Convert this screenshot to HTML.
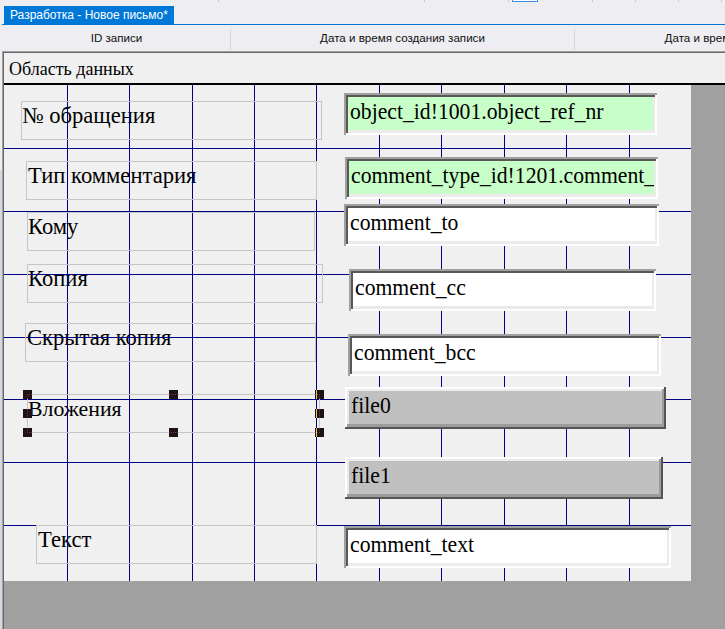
<!DOCTYPE html>
<html><head><meta charset="utf-8">
<style>
html,body{margin:0;padding:0;}
body{width:725px;height:629px;overflow:hidden;position:relative;background:#eeeef2;font-family:"Liberation Sans",sans-serif;}
.a{position:absolute;}
.tick{position:absolute;top:0;width:1px;height:2px;background:#c4c8d6;}
#tab{left:4px;top:6px;width:170px;height:18px;background:#0078d7;color:#fff;font-size:12px;}
#tab span{position:absolute;left:6px;top:2px;white-space:nowrap;}
#tabline{left:2px;top:24px;width:723px;height:1px;background:#0078d7;}
.hd{position:absolute;top:31px;font-size:11.6px;color:#101010;white-space:nowrap;text-align:center;}
.sep{position:absolute;top:29px;width:1px;height:21px;background:#d3d6de;}
#ob{left:4px;top:53px;width:721px;height:30px;background:#f0f0f0;}
#obt{left:9px;top:59px;font-family:"Liberation Serif",serif;font-size:18px;color:#000;white-space:nowrap;}
#form{left:4px;top:85px;width:687px;height:496px;background:#f0f0f0;}
.vl{position:absolute;top:85px;width:1px;height:496px;background:#000080;}
.hl{position:absolute;left:4px;width:687px;height:1px;background:#000080;}
.lt{position:absolute;font-family:"Liberation Serif",serif;font-size:22.6px;color:#000;white-space:nowrap;line-height:26px;}
.lb{position:absolute;box-sizing:border-box;border:1px solid #c6c6c6;height:39px;}
.inp{position:absolute;box-sizing:border-box;height:42px;background:#fff;box-shadow:inset 2px 2px 0 #a0a0a0,inset -2px -2px 0 #ffffff,inset 4px 4px 0 #585858,inset -4px -5px 0 #ebebeb;}
.inp>div,.btn>div{position:absolute;left:4px;top:4px;right:4px;bottom:4px;overflow:hidden;}
.btn{position:absolute;box-sizing:border-box;height:42px;background:#c0c0c0;box-shadow:inset -2px -2px 0 #555555,inset 2px 2px 0 #ffffff,inset -4px -5px 0 #9c9c9c,inset 4px 4px 0 #ebebeb;}
.it{position:absolute;left:2px;top:2px;transform:scaleY(1.1);transform-origin:0 20px;font-family:"Liberation Serif",serif;font-size:21.7px;line-height:26px;color:#000;white-space:nowrap;}
.g{background:#c8ffc8;}
.h{position:absolute;width:9px;height:9px;background:#1e1212;}
</style></head><body>
<!-- top ticks -->
<div class="tick" style="left:218px"></div>
<div class="tick" style="left:424px"></div>
<div class="tick" style="left:508px"></div>
<div class="tick" style="left:592px"></div>
<div class="tick" style="left:635px"></div>
<div class="tick" style="left:678px"></div>
<div class="tick" style="left:721px"></div>
<div class="a" style="left:512px;top:0;width:24px;height:1px;border:1px solid #3c8ee0;border-top:none;background:#fff"></div>

<div id="tab" class="a"><span>Разработка - Новое письмо*</span></div>
<div id="tabline" class="a"></div>

<div class="hd" style="left:2px;width:229px">ID записи</div>
<div class="sep" style="left:230px"></div>
<div class="hd" style="left:231px;width:343px">Дата и время создания записи</div>
<div class="sep" style="left:574px"></div>
<div class="hd" style="left:575px;width:344px">Дата и время создания записи</div>

<!-- outer border -->
<div class="a" style="left:2px;top:51px;width:723px;height:1px;background:#a0a0a0"></div>
<div class="a" style="left:3px;top:52px;width:722px;height:1px;background:#696969"></div>
<div class="a" style="left:2px;top:51px;width:1px;height:578px;background:#a0a0a0"></div>
<div class="a" style="left:3px;top:52px;width:1px;height:577px;background:#696969"></div>
<div class="a" style="left:0;top:170px;width:2px;height:459px;background:#d6d9e4"></div>

<div id="ob" class="a"></div>
<div id="obt" class="a">Область данных</div>
<div class="a" style="left:4px;top:83px;width:721px;height:2px;background:#000"></div>

<!-- dark gray surround -->
<div class="a" style="left:4px;top:85px;width:721px;height:544px;background:#a0a0a0"></div>
<div id="form" class="a"></div>

<!-- label texts -->
<div class="lt" style="left:22px;top:103px">№ обращения</div>
<div class="lt" style="left:28px;top:163px">Тип комментария</div>
<div class="lt" style="left:28px;top:214px">Кому</div>
<div class="lt" style="left:28px;top:266px">Копия</div>
<div class="lt" style="left:27px;top:325px">Скрытая копия</div>
<div class="lt" style="left:28px;top:396px;font-size:21.8px">Вложения</div>
<div class="lt" style="left:38px;top:527px">Текст</div>

<!-- grid -->
<div class="vl" style="left:67px"></div>
<div class="vl" style="left:129px"></div>
<div class="vl" style="left:192px"></div>
<div class="vl" style="left:254px"></div>
<div class="vl" style="left:316px"></div>
<div class="vl" style="left:379px"></div>
<div class="vl" style="left:441px"></div>
<div class="vl" style="left:504px"></div>
<div class="vl" style="left:566px"></div>
<div class="vl" style="left:629px"></div>
<div class="hl" style="top:148px"></div>
<div class="hl" style="top:211px"></div>
<div class="hl" style="top:274px"></div>
<div class="hl" style="top:337px"></div>
<div class="hl" style="top:399px"></div>
<div class="hl" style="top:462px"></div>
<div class="hl" style="top:525px"></div>

<!-- label borders -->
<div class="lb" style="left:21px;top:101px;width:301px"></div>
<div class="lb" style="left:26px;top:161px;width:291px"></div>
<div class="lb" style="left:27px;top:212px;width:288px"></div>
<div class="lb" style="left:27px;top:264px;width:296px"></div>
<div class="lb" style="left:25px;top:323px;width:291px"></div>
<div class="lb" style="left:27px;top:394px;width:293px"></div>
<div class="lb" style="left:36px;top:525px;width:281px"></div>

<!-- inputs -->
<div class="inp g" style="left:344px;top:93px;width:313px"><div><span class="it">object_id!1001.object_ref_nr</span></div></div>
<div class="inp g" style="left:345px;top:157px;width:313px"><div><span class="it">comment_type_id!1201.comment_type_nm</span></div></div>
<div class="inp" style="left:344px;top:204px;width:315px"><div><span class="it">comment_to</span></div></div>
<div class="inp" style="left:349px;top:269px;width:307px"><div><span class="it">comment_cc</span></div></div>
<div class="inp" style="left:348px;top:334px;width:313px"><div><span class="it">comment_bcc</span></div></div>
<div class="btn" style="left:345px;top:387px;width:321px"><div><span class="it">file0</span></div></div>
<div class="btn" style="left:345px;top:457px;width:318px"><div><span class="it">file1</span></div></div>
<div class="inp" style="left:344px;top:526px;width:327px"><div><span class="it">comment_text</span></div></div>

<!-- handles -->
<div class="h" style="left:23px;top:390px"><div style="position:absolute;left:4px;top:4px;width:5px;height:0;border-top:1px dotted #7a2a7a"></div><div style="position:absolute;left:4px;top:4px;width:0;height:5px;border-left:1px dotted #7a2a7a"></div></div>
<div class="h" style="left:169px;top:390px"><div style="position:absolute;left:0px;top:4px;width:9px;height:0;border-top:1px dotted #7a2a7a"></div></div>
<div class="h" style="left:315px;top:390px"><div style="position:absolute;left:1px;top:0;width:1px;height:9px;background:#d8d040"></div><div style="position:absolute;left:0px;top:4px;width:5px;height:0;border-top:1px dotted #7a2a7a"></div><div style="position:absolute;left:4px;top:4px;width:0;height:5px;border-left:1px dotted #7a2a7a"></div></div>
<div class="h" style="left:23px;top:409px"><div style="position:absolute;left:4px;top:0px;width:0;height:9px;border-left:1px dotted #7a2a7a"></div></div>
<div class="h" style="left:315px;top:409px"><div style="position:absolute;left:1px;top:0;width:1px;height:9px;background:#d8d040"></div><div style="position:absolute;left:4px;top:0px;width:0;height:9px;border-left:1px dotted #7a2a7a"></div></div>
<div class="h" style="left:23px;top:428px"><div style="position:absolute;left:4px;top:0px;width:0;height:5px;border-left:1px dotted #7a2a7a"></div><div style="position:absolute;left:4px;top:4px;width:5px;height:0;border-top:1px dotted #7a2a7a"></div></div>
<div class="h" style="left:169px;top:428px"><div style="position:absolute;left:0px;top:4px;width:9px;height:0;border-top:1px dotted #7a2a7a"></div></div>
<div class="h" style="left:315px;top:428px"><div style="position:absolute;left:1px;top:0;width:1px;height:9px;background:#d8d040"></div><div style="position:absolute;left:0px;top:4px;width:5px;height:0;border-top:1px dotted #7a2a7a"></div><div style="position:absolute;left:4px;top:0px;width:0;height:5px;border-left:1px dotted #7a2a7a"></div></div>
</body></html>
